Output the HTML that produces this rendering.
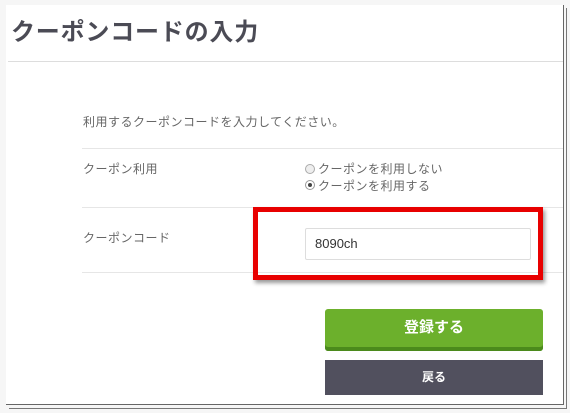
<!DOCTYPE html>
<html><head><meta charset="utf-8"><style>
body{margin:0;width:570px;height:413px;background:#f6f6f6;position:relative;overflow:hidden;font-family:"Liberation Sans","Noto Sans CJK JP",sans-serif;}
.a{position:absolute}
.t{color:#666;font-size:12px;line-height:14px;letter-spacing:0.5px}
</style></head><body>
<div class="a" style="left:6px;top:5px;width:557px;height:399px;background:#fff;border-right:1px solid #666;border-bottom:1px solid #666"></div>
<div class="a" style="left:566px;top:8px;width:1px;height:401px;background:#777"></div>
<div class="a" style="left:9px;top:408px;width:558px;height:1px;background:#777"></div>
<div class="a" style="left:11px;top:19px;font-size:24px;letter-spacing:0.8px;font-weight:bold;color:#4b4b55;line-height:28px">クーポンコードの入力</div>
<div class="a" style="left:8px;top:61px;width:555px;height:1px;background:#ddd"></div>
<div class="a t" style="left:83px;top:115px">利用するクーポンコードを入力してください。</div>
<div class="a" style="left:82px;top:148px;width:481px;height:1px;background:#e6e6e6"></div>
<div class="a t" style="left:83px;top:162px">クーポン利用</div>
<div class="a" style="left:305px;top:164px;width:8px;height:8px;border:1px solid #aaa;border-radius:50%;background:#eee"></div>
<div class="a t" style="left:318px;top:162px">クーポンを利用しない</div>
<div class="a" style="left:305px;top:180px;width:8px;height:8px;border:1px solid #999;border-radius:50%;background:#fff"></div>
<div class="a" style="left:308px;top:183px;width:4px;height:4px;border-radius:50%;background:#444"></div>
<div class="a t" style="left:318px;top:179px">クーポンを利用する</div>
<div class="a" style="left:82px;top:207px;width:481px;height:1px;background:#e6e6e6"></div>
<div class="a t" style="left:83px;top:231px">クーポンコード</div>
<div class="a" style="left:82px;top:272px;width:481px;height:1px;background:#e6e6e6"></div>
<div class="a" style="left:305px;top:228px;width:224px;height:30px;border:1px solid #ddd;border-radius:2px;background:#fff"></div>
<div class="a" style="left:315px;top:236px;font-size:13px;color:#333">8090ch</div>
<div class="a" style="left:253px;top:207px;width:280px;height:63px;border:5px solid #e80000;box-shadow:2px 3px 4px rgba(0,0,0,.4)"></div>
<div class="a" style="left:325px;top:309px;width:218px;height:42px;background:#6cb02c;border-radius:3px;box-shadow:inset 0 -4px 0 #4b8a1c;color:#fff;font-weight:bold;font-size:15px;line-height:38px;text-align:center">登録する</div>
<div class="a" style="left:325px;top:360px;width:218px;height:35px;background:#51505e;color:#fff;font-weight:bold;font-size:12px;line-height:35px;text-align:center">戻る</div>
</body></html>
